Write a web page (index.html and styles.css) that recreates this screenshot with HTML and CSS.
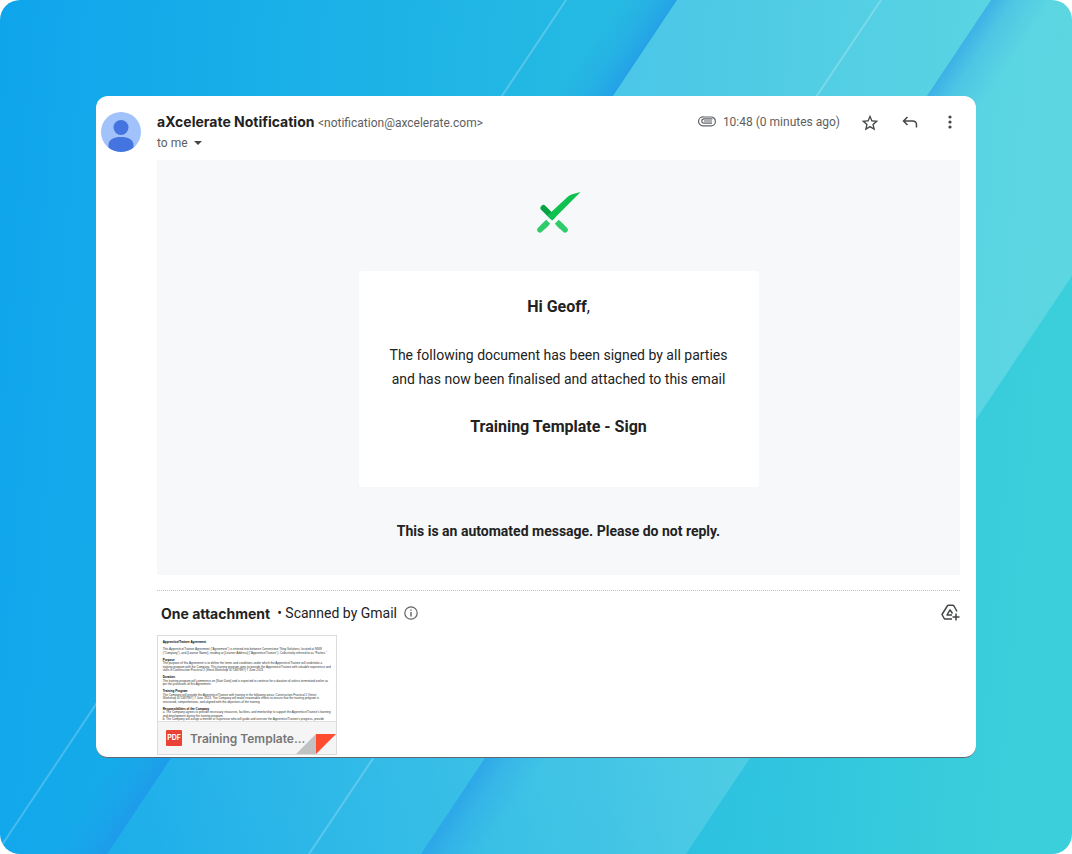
FILE: index.html
```html
<!DOCTYPE html>
<html lang="en">
<head>
  <meta charset="UTF-8" />
  <meta name="viewport" content="width=device-width, initial-scale=1.0"/>
  <title>aXcelerate Notification</title>
  <link rel="stylesheet" href="styles.css">
</head>
<body>
  <div class="stage">
    <svg class="backdrop" viewBox="0 0 1072 854" preserveAspectRatio="none" aria-hidden="true">
      <defs>
        <linearGradient id="base" gradientUnits="userSpaceOnUse" x1="0" y1="0" x2="1072" y2="90">
          <stop offset="0" stop-color="#0fa5ec"/>
          <stop offset="0.6" stop-color="#27bce2"/>
          <stop offset="1" stop-color="#3bcfdb"/>
        </linearGradient>
        <linearGradient id="band" gradientUnits="userSpaceOnUse" x1="107" y1="854" x2="677" y2="500">
          <stop offset="0" stop-color="#fff" stop-opacity="0.03"/>
          <stop offset="1" stop-color="#fff" stop-opacity="0.17"/>
        </linearGradient>
        <linearGradient id="shadeLeft" gradientUnits="userSpaceOnUse" x1="677" y1="0" x2="635" y2="-28">
          <stop offset="0" stop-color="#2390ea" stop-opacity="0.6"/>
          <stop offset="0.4" stop-color="#2390ea" stop-opacity="0.25"/>
          <stop offset="1" stop-color="#2390ea" stop-opacity="0"/>
        </linearGradient>
        <linearGradient id="shadeRight" gradientUnits="userSpaceOnUse" x1="991" y1="0" x2="1033" y2="28">
          <stop offset="0" stop-color="#2390ea" stop-opacity="0.5"/>
          <stop offset="0.4" stop-color="#2390ea" stop-opacity="0.2"/>
          <stop offset="1" stop-color="#2390ea" stop-opacity="0"/>
        </linearGradient>
      </defs>
      <rect width="1072" height="854" fill="url(#base)"/>
      <path d="M677 0 107 854H40L610 0Z" fill="url(#shadeLeft)"/>
      <path d="M677 0H1256L686 854H107Z" fill="url(#band)"/>
      <path d="M991 0H1058L488 854H421Z" fill="url(#shadeRight)"/>
      <path d="M566 0 -4 854M881 0 309 854" stroke="#fff" stroke-opacity="0.22" stroke-width="2"/>
    </svg>

    <main class="mail">
      <header class="mail-header">
        <svg class="avatar" viewBox="0 0 40 40" role="img" aria-label="Sender">
          <circle cx="20" cy="20" r="20" fill="#a1c2fa"/>
          <circle cx="20" cy="15.500" r="7.500" fill="#4374e0"/>
          <path d="M7.500 35.500v-2.500C7.500 27.500 13 25 20 25s12.500 2.500 12.500 8v2.500A20 20 0 0 1 7.500 35.500Z" fill="#4374e0"/>
        </svg>
        <div class="sender">
          <div class="from"><strong>aXcelerate Notification</strong> <span>&lt;notification@axcelerate.com&gt;</span></div>
          <button class="recipient">to me <i class="caret"></i></button>
        </div>
        <div class="meta">
          <svg width="18" height="12" viewBox="0 0 18 12" fill="none" stroke="#5f6368" stroke-width="1.200"><path d="M14.500 2.800H6a2.200 2.200 0 0 0 0 4.400h8M4.500 9.800H13a4.300 4.300 0 0 0 0-8.800H5.500a4.400 4.400 0 0 0-1 8.800M6 5h8"/></svg>
          <time>10:48 (0 minutes ago)</time>
        </div>
        <div class="actions">
          <button aria-label="Star"><svg viewBox="0 0 20 20"><path fill="#444746" fill-rule="evenodd" d="m18.330 8.740-5.990-.52L10 2.700 7.660 8.230l-5.990.51 4.550 3.940L4.850 18.530 10 15.430l5.150 3.100-1.360-5.850ZM10 13.870l-3.130 1.890.830-3.560-2.760-2.400 3.640-.32L10 6.120l1.430 3.370 3.640.32-2.760 2.400.830 3.560Z"/></svg></button>
          <button aria-label="Reply"><svg viewBox="0 0 20 20" fill="none" stroke="#444746" stroke-width="1.500"><path d="M7.500 5 3.500 9l4 4M3.500 9h9q4 0 4 4v2.500"/></svg></button>
          <button aria-label="More"><svg viewBox="0 0 20 20" fill="#444746"><circle cx="10" cy="5" r="1.600"/><circle cx="10" cy="10" r="1.600"/><circle cx="10" cy="15" r="1.600"/></svg></button>
        </div>
      </header>

      <div class="mail-content">
        <section class="message">
          <svg class="logo" viewBox="0 0 44 42" role="img" aria-label="aXcelerate">
            <path d="M6.500 16 15 24.500" stroke="#08a443" stroke-width="6" stroke-linecap="round"/>
            <path d="M10.500 23.500 31 4.500Q33 2.800 36 2L43.500 0 15.200 28.500Z" fill="#0fc14f"/>
            <g stroke="#2fcc69" stroke-width="5.600">
              <path d="M9 32 3 37.800M22 32 28 37.800" stroke-linecap="round"/>
              <path d="M11.200 29.800 6 35M19.800 29.800 25 35"/>
            </g>
          </svg>
          <div class="letter">
            <h1><b>Hi Geoff</b>,</h1>
            <p>The following document has been signed by all parties and has now been finalised and attached to this email</p>
            <h2>Training Template - Sign</h2>
          </div>
          <p class="notice">This is an automated message. Please do not reply.</p>
        </section>

        <section class="attachments">
          <div class="attachments-bar">
            <strong>One attachment</strong>
            <span>• Scanned by Gmail</span>
            <svg width="14" height="14" viewBox="0 0 14 14"><circle cx="7" cy="7" r="6.200" fill="none" stroke="#5f6368" stroke-width="1.200"/><path d="M7 6v4.500M7 3.500v1.300" stroke="#5f6368" stroke-width="1.400"/></svg>
            <button class="drive" aria-label="Add to Drive"><svg viewBox="0 0 20 20" fill="none" stroke="#444746" stroke-width="1.500" stroke-linejoin="round"><path d="M17 8.500 14 3Q13.500 2.300 12.500 2.300H8.500Q7.800 2.300 7.300 3L2 11.500 4.500 16H12M12 12H7L10 6.800 12.500 10.500M16 10.500v7M12.500 14h7"/></svg></button>
          </div>
          <a class="file" href="#">
            <svg class="preview" viewBox="0 0 534 255" aria-hidden="true">
              <g class="preview-heading">
                <text x="14" y="21">Apprentice/Trainee Agreement</text>
                <text x="14" y="75">Purpose</text>
                <text x="14" y="127">Duration</text>
                <text x="14" y="169">Training Program</text>
                <text x="14" y="221">Responsibilities of the Company</text>
              </g>
              <g>
                <text x="14" y="43">This Apprentice/Trainee Agreement ("Agreement") is entered into between Cornerstone Tiling Solutions, located at NSW</text>
                <text x="14" y="53">("Company"), and [Learner Name], residing at [Learner Address] ("Apprentice/Trainee"). Collectively referred to as "Parties."</text>
                <text x="14" y="85">The purpose of this Agreement is to define the terms and conditions under which the Apprentice/Trainee will undertake a</text>
                <text x="14" y="96">training program with the Company. This training program aims to provide the Apprentice/Trainee with valuable experience and</text>
                <text x="14" y="106">skills in Construction Practical 2 (Intest Workshop ID 1687897) 7 June 2023.</text>
                <text x="14" y="138">The training program will commence on [Start Date] and is expected to continue for a duration of unless terminated earlier as</text>
                <text x="14" y="148">per the provisions of this Agreement.</text>
                <text x="14" y="179">The Company will provide the Apprentice/Trainee with training in the following areas: Construction Practical 2 (Intest</text>
                <text x="14" y="190">Workshop ID 1687897) 7 June 2023. The Company will make reasonable efforts to ensure that the training program is</text>
                <text x="14" y="200">structured, comprehensive, and aligned with the objectives of the training.</text>
                <text x="14" y="232">a. The Company agrees to provide necessary resources, facilities, and mentorship to support the Apprentice/Trainee's learning</text>
                <text x="14" y="242">and development during the training program.</text>
                <text x="14" y="252">b. The Company will assign a mentor or supervisor who will guide and oversee the Apprentice/Trainee's progress, provide</text>
              </g>
            </svg>
            <span class="file-bar"><span class="pdf">PDF</span>Training Template...</span>
            <svg class="fold" viewBox="0 0 40 20" aria-hidden="true"><path d="M0 20 20 0V20Z" fill="#c2c2c2"/><path d="M20 0H40L20 20Z" fill="#ff4b30"/></svg>
          </a>
        </section>
      </div>
    </main>
  </div>
</body>
</html>
```
FILE: styles.css
```css
* {
  box-sizing: border-box;
}

body {
  margin: 0;
  background: #fff;
  color: #222;
  font-family: Roboto, "Liberation Sans", sans-serif;
  font-size: 14px;
}

h1, h2, p {
  margin: 0;
}

button {
  border: none;
  background: none;
  padding: 0;
  color: inherit;
  font: inherit;
  cursor: pointer;
}

.stage {
  position: relative;
  min-height: 100vh;
  padding: 96px;
  border-radius: 20px;
  overflow: hidden;
}

.backdrop {
  position: absolute;
  inset: 0;
  width: 100%;
  height: 100%;
}

.mail {
  position: relative;
  padding: 16px 16px 2px 5px;
  background: #fff;
  border-radius: 12px;
  border-bottom: 1px solid #5f6673;
}

.mail-header {
  display: flex;
  align-items: flex-start;
  height: 48px;
}

.avatar {
  width: 40px;
  height: 40px;
  margin-right: 16px;
}

.sender {
  flex: 1;
  line-height: 20px;
}

.from strong {
  font-family: Inter, sans-serif;
  font-size: 14px;
  font-weight: 700;
}

.from span, .recipient, .meta {
  font-size: 12px;
  color: #5e5e5e;
}

.recipient {
  display: flex;
  align-items: center;
  gap: 6px;
  line-height: 20px;
}

.caret {
  border: 4px solid transparent;
  border-top-color: #444746;
  border-bottom: none;
}

.meta {
  display: flex;
  align-items: center;
  gap: 7px;
  line-height: 20px;
}

.actions {
  display: flex;
  gap: 20px;
  margin-left: 20px;
}

.actions button, .drive {
  width: 20px;
  height: 20px;
}

.actions svg, .drive svg {
  display: block;
  width: 20px;
  height: 20px;
}

.mail-content {
  margin-left: 56px;
}

.message {
  display: flex;
  flex-direction: column;
  align-items: center;
  padding: 32px 0;
  background: #f6f8fa;
  text-align: center;
}

.logo {
  width: 44px;
  height: 42px;
}

.letter {
  width: 400px;
  max-width: 100%;
  margin: 37px 0 32px;
  padding: 24px 24px 48px;
  border-radius: 3px;
  background: #fff;
  line-height: 24px;
}

.letter h1, .letter h2 {
  font-size: 16px;
}

.letter h1 {
  font-weight: 400;
}

.letter p {
  margin: 24px 0;
}

.notice {
  font-weight: 700;
  line-height: 24px;
}

.attachments {
  margin-top: 15px;
  border-top: 1px dotted #c0c0c0;
}

.attachments-bar {
  display: flex;
  align-items: center;
  gap: 7px;
  height: 44px;
  padding-left: 4px;
}

.attachments-bar strong {
  font-family: Inter, sans-serif;
  font-weight: 700;
}

.drive {
  margin-left: auto;
}

.file {
  position: relative;
  display: block;
  width: 180px;
  border: 1px solid #dadce0;
  color: #777;
  text-decoration: none;
}

.preview {
  display: block;
  width: 100%;
  fill: #333;
  font-family: "Liberation Sans", Arial, sans-serif;
  font-size: 9px;
}

.preview-heading {
  fill: #000;
  font-weight: 700;
}

.file-bar {
  display: flex;
  align-items: center;
  gap: 8px;
  height: 33px;
  padding-left: 8px;
  border-top: 1px solid #e0e0e0;
  background: #f5f5f5;
  font-family: Inter, sans-serif;
  font-size: 12px;
  font-weight: 600;
}

.pdf {
  width: 16px;
  border-radius: 1px;
  background: #ea4335;
  color: #fff;
  font-size: 7px;
  font-weight: 700;
  line-height: 16px;
  text-align: center;
}

.fold {
  position: absolute;
  right: 0;
  bottom: 0;
  width: 40px;
  height: 20px;
}
```
